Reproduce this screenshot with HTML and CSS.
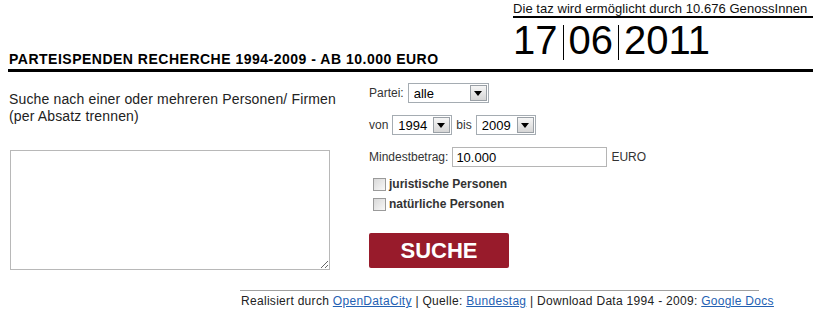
FILE: index.html
```html
<!DOCTYPE html>
<html lang="de">
<head>
  <meta charset="UTF-8" />
  <title>Parteispenden Recherche - taz</title>
  <link rel="stylesheet" href="styles.css">
</head>
<body>

<header class="top">
  <h1>PARTEISPENDEN RECHERCHE 1994-2009 - AB 10.000 EURO</h1>
  <div class="taz">
    <p class="taz-line">Die taz wird ermöglicht durch 10.676 GenossInnen</p>
    <div class="date"><span>17</span><span>06</span><span>2011</span></div>
  </div>
</header>

<form class="search" onsubmit="return false">
  <div class="col-left">
    <p class="hint">Suche nach einer oder mehreren Personen/ Firmen<br>(per Absatz trennen)</p>
    <textarea class="names"></textarea>
  </div>

  <div class="col-right">
    <div class="row">
      <label>Partei:</label>
      <span class="sel sel-partei"><select><option>alle</option></select><span class="arrow"></span></span>
    </div>
    <div class="row">
      <label>von</label>
      <span class="sel sel-year"><select><option>1994</option></select><span class="arrow"></span></span>
      <label>bis</label>
      <span class="sel sel-year"><select><option>2009</option></select><span class="arrow"></span></span>
    </div>
    <div class="row">
      <label>Mindestbetrag:</label>
      <input type="text" class="amount" value="10.000" />
      <span>EURO</span>
    </div>
    <div class="check first">
      <input type="checkbox" id="jur" /><label for="jur">juristische Personen</label>
    </div>
    <div class="check">
      <input type="checkbox" id="nat" /><label for="nat">natürliche Personen</label>
    </div>
    <button class="go">SUCHE</button>
  </div>
</form>

<footer class="foot">
  Realisiert durch <a href="#">OpenDataCity</a> | Quelle: <a href="#">Bundestag</a> | Download Data 1994 - 2009: <a href="#">Google Docs</a>
</footer>

</body>
</html>
```

FILE: styles.css
```css
body {
  margin: 0 1px 0 8px;
  font-family: "Liberation Sans", Arial, sans-serif;
  color: #222;
  background: #fff;
}
.top {
  display: flex;
  justify-content: space-between;
  align-items: flex-end;
  border-bottom: 3px solid #000;
}
.top h1 {
  font-size: 14px;
  line-height: 17px;
  letter-spacing: 0.5px;
  margin: 0 0 1px 1px;
  color: #000;
}
.taz {
  width: 300px;
}
.taz-line {
  margin: 0;
  padding-top: 1px;
  font-size: 13px;
  line-height: 15px;
  letter-spacing: 0.05px;
  color: #111;
  border-bottom: 2px solid #000;
}
.date {
  display: flex;
  margin: 7px 0 9px;
  font-size: 40px;
  line-height: 31px;
  color: #000;
}
.date span {
  padding: 0 5px 4px;
}
.date span:first-child {
  padding-left: 0;
}
.date span + span {
  border-left: 1px solid #000;
}
.search {
  display: grid;
  grid-template-columns: 361px 1fr;
  padding-top: 11px;
}
.hint {
  margin: 8px 0 0 1px;
  font-size: 14px;
  line-height: 17px;
  letter-spacing: 0.15px;
  color: #222;
}
.names {
  display: block;
  box-sizing: border-box;
  width: 320px;
  height: 120px;
  margin: 25px 0 0 2px;
  border: 1px solid #b8b8b8;
  resize: both;
}
.row {
  display: flex;
  align-items: center;
  gap: 4px;
  height: 20px;
  margin-bottom: 12px;
  font-size: 12px;
  color: #333;
}
.sel {
  position: relative;
  display: inline-block;
  height: 20px;
}
.sel select {
  appearance: none;
  -webkit-appearance: none;
  box-sizing: border-box;
  height: 20px;
  width: 100%;
  margin: 0;
  padding: 0 0 0 5px;
  border: 1px solid #a5acb2;
  border-radius: 0;
  background: #fff;
  font-family: "Liberation Sans", Arial, sans-serif;
  font-size: 13px;
  color: #000;
}
.sel-partei { width: 81px; }
.sel-year { width: 60px; }
.arrow {
  position: absolute;
  top: 2px;
  right: 2px;
  width: 15px;
  height: 14px;
  border: 1px solid #9aa0a6;
  background: linear-gradient(#f6f6f6, #d6d6d6);
  pointer-events: none;
}
.arrow::after {
  content: "";
  position: absolute;
  left: 3px;
  top: 5px;
  border-top: 5px solid #000;
  border-left: 4.5px solid transparent;
  border-right: 4.5px solid transparent;
}
.amount {
  box-sizing: border-box;
  width: 155px;
  height: 20px;
  margin: 0;
  padding: 0 3px;
  border: 1px solid #b5b5b5;
  font-family: "Liberation Sans", Arial, sans-serif;
  font-size: 13px;
  color: #000;
}
.check {
  display: flex;
  align-items: center;
  height: 16px;
  margin-top: 4px;
  font-size: 12px;
  font-weight: bold;
  color: #333;
}
.check.first {
  margin-top: -3px;
}
.check input {
  appearance: none;
  -webkit-appearance: none;
  width: 13px;
  height: 13px;
  margin: 0 3px 0 4px;
  border: 1px solid #9a9a9a;
  background: linear-gradient(135deg, #d8d8d8, #f8f8f8);
}
button.go {
  display: block;
  width: 140px;
  height: 35px;
  margin-top: 21px;
  border: none;
  border-radius: 2px;
  background-color: #981b2b;
  color: #fff;
  font-family: "Liberation Sans", Arial, sans-serif;
  font-size: 22px;
  font-weight: bold;
  cursor: pointer;
}
.foot {
  width: 518px;
  margin: 20px 0 0 232px;
  padding: 3px 0 0 1px;
  border-top: 1px solid #a0a0a0;
  font-size: 12px;
  line-height: 15px;
  letter-spacing: 0.3px;
  white-space: nowrap;
  color: #222;
}
.foot a {
  color: #2461b3;
}
```
